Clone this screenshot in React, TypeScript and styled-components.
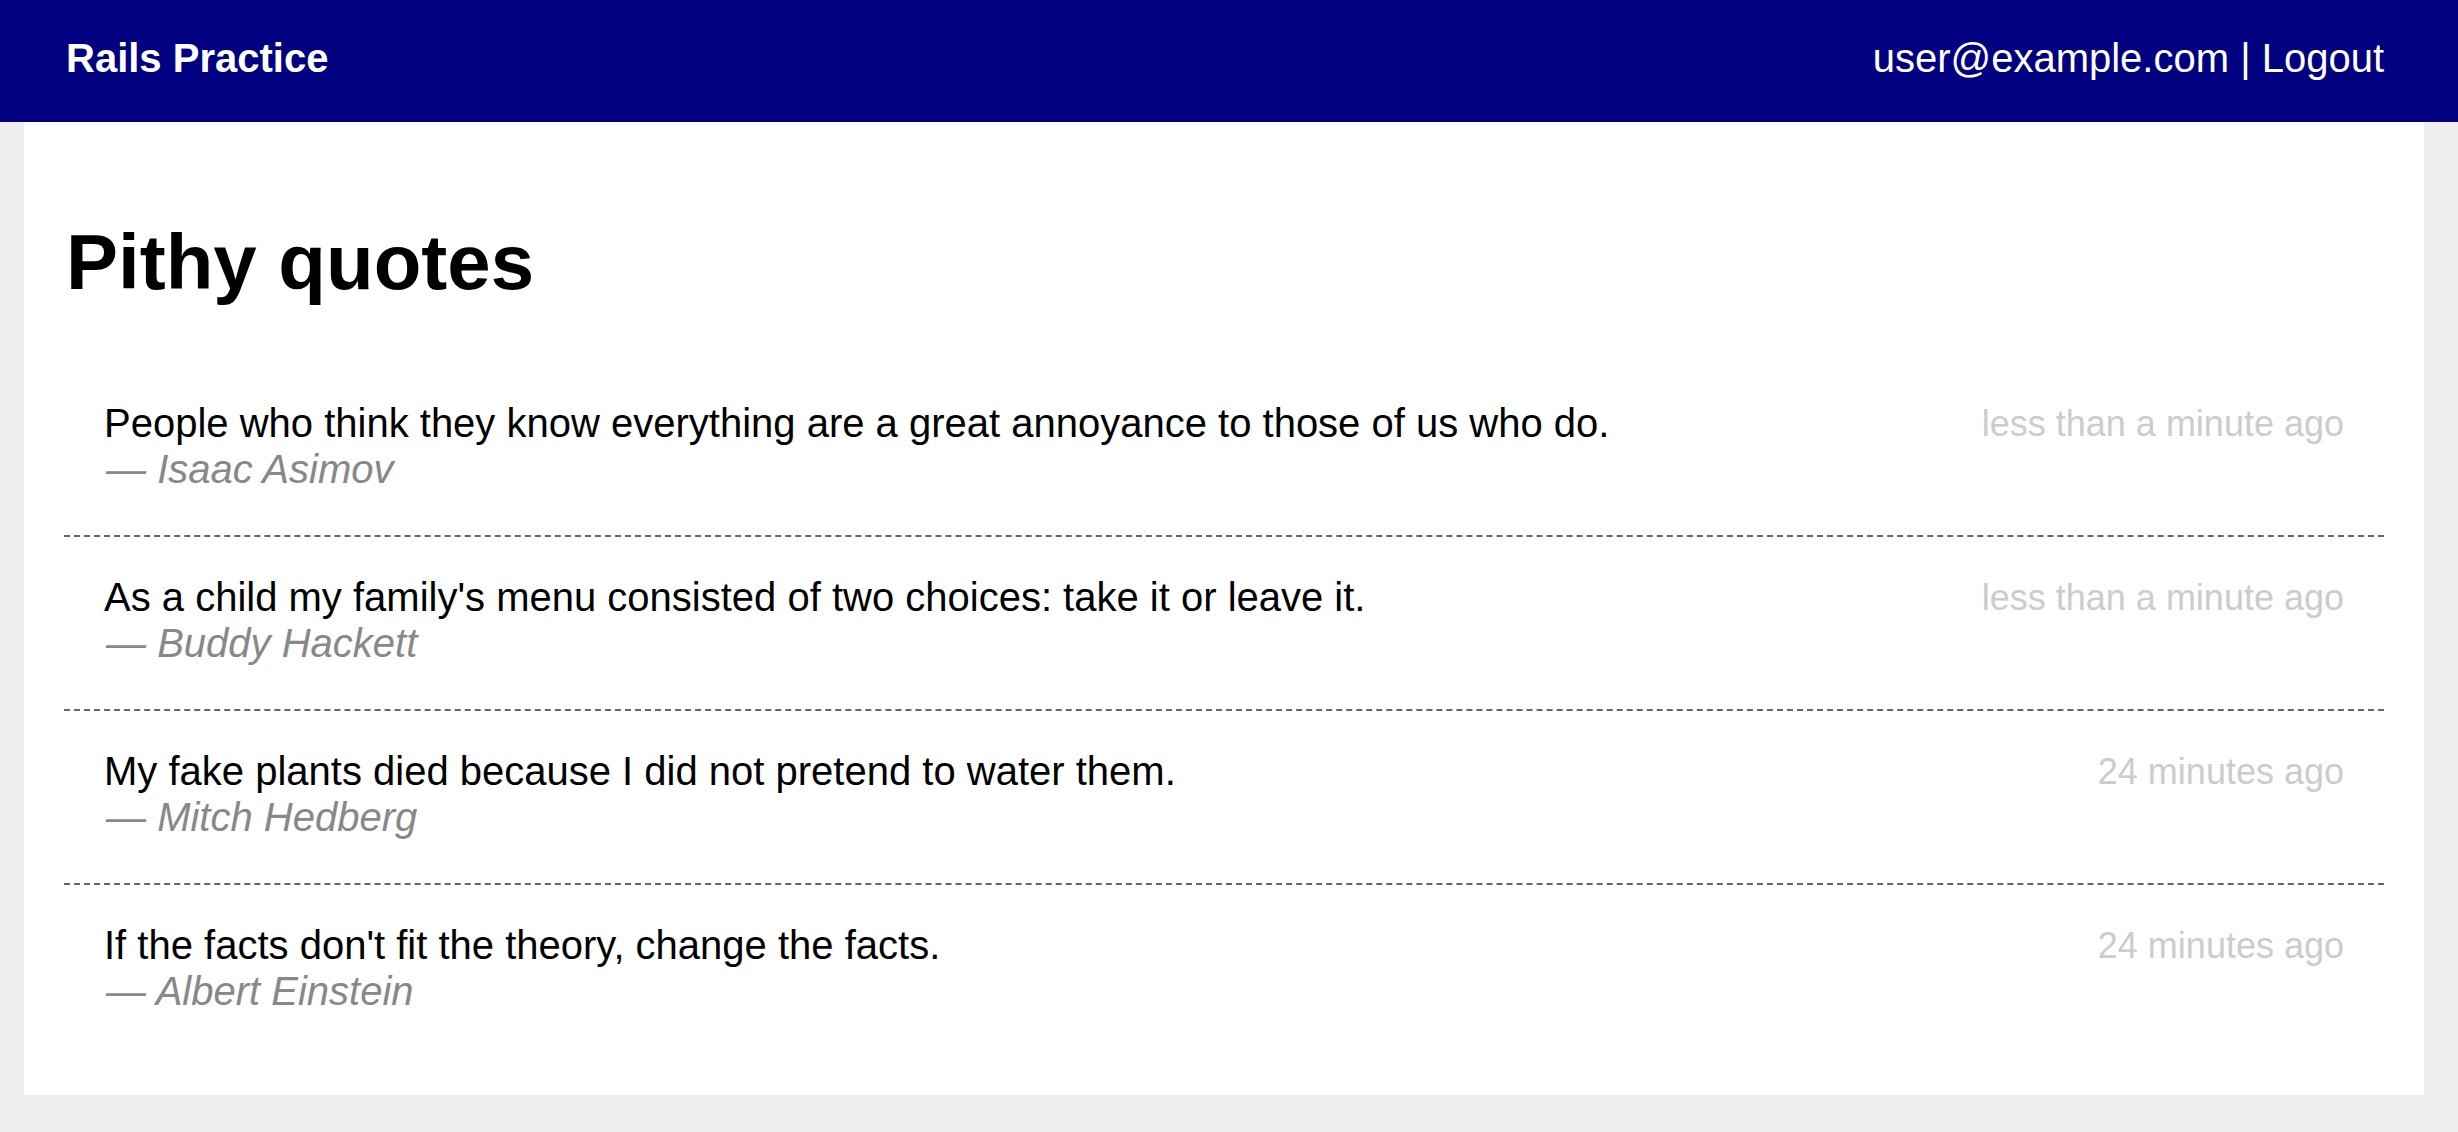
import React from "react";
import styled, { createGlobalStyle } from "styled-components";

const GlobalStyle = createGlobalStyle`
  html, body {
    margin: 0;
    padding: 0;
    background: #eeeeee;
    font-family: "Liberation Sans", Arial, Helvetica, sans-serif;
  }
`;

const Page = styled.div`
  padding-right: 10px;
  min-height: 1132px;
  box-sizing: border-box;
`;

const HeaderBar = styled.header`
  background: #000080;
  margin-right: -10px;
  padding-right: 10px;
`;

const HeaderInner = styled.div`
  width: 2400px;
  margin: 0 auto;
  box-sizing: border-box;
  height: 122px;
  padding: 0 40px 6px 40px;
  display: flex;
  align-items: center;
  justify-content: space-between;
  color: #ffffff;
  font-size: 40px;
`;

const Brand = styled.a`
  color: #ffffff;
  font-weight: bold;
  text-decoration: none;
  padding-left: 2px;
`;

const UserNav = styled.div`
  color: #ffffff;
  display: flex;
`;

const NavLink = styled.a`
  color: #ffffff;
  text-decoration: none;
`;

const Panel = styled.main`
  width: 2400px;
  margin: 0 auto;
  box-sizing: border-box;
  background: #ffffff;
  padding: 40px 40px 38px;
`;

const Title = styled.h1`
  font-size: 78px;
  line-height: 92px;
  font-weight: bold;
  margin: 54px 0 55px;
  padding-left: 2px;
  color: #000000;
`;

const QuoteList = styled.ul`
  list-style: none;
  margin: 0;
  padding: 0;
`;

const QuoteRow = styled.li<{ $last?: boolean }>`
  display: flex;
  justify-content: space-between;
  align-items: flex-start;
  padding: 37px 40px 43px;
  border-bottom: ${(p) => (p.$last ? "none" : "2px dashed #666666")};
`;

const QuoteBody = styled.div`
  display: flex;
  flex-direction: column;
`;

const QuoteText = styled.div`
  font-size: 40px;
  line-height: 46px;
  color: #000000;
`;

const Author = styled.div`
  font-size: 40px;
  line-height: 46px;
  font-style: italic;
  color: #888888;
  padding-left: 2px;
`;

const Timestamp = styled.div`
  font-size: 36px;
  line-height: 46px;
  color: #cccccc;
  padding-top: 1px;
  white-space: nowrap;
`;

const quotes = [
  {
    text: "People who think they know everything are a great annoyance to those of us who do.",
    author: "Isaac Asimov",
    time: "less than a minute ago",
  },
  {
    text: "As a child my family's menu consisted of two choices: take it or leave it.",
    author: "Buddy Hackett",
    time: "less than a minute ago",
  },
  {
    text: "My fake plants died because I did not pretend to water them.",
    author: "Mitch Hedberg",
    time: "24 minutes ago",
  },
  {
    text: "If the facts don't fit the theory, change the facts.",
    author: "Albert Einstein",
    time: "24 minutes ago",
  },
];

export default function App() {
  return (
    <>
      <GlobalStyle />
      <Page>
        <HeaderBar>
          <HeaderInner>
            <Brand href="#">Rails Practice</Brand>
            <UserNav>
              <span>user@example.com&nbsp;|&nbsp;</span>
              <NavLink href="#">Logout</NavLink>
            </UserNav>
          </HeaderInner>
        </HeaderBar>
        <Panel>
          <Title>Pithy quotes</Title>
          <QuoteList>
            {quotes.map((q, i) => (
              <QuoteRow key={i} $last={i === quotes.length - 1}>
                <QuoteBody>
                  <QuoteText>{q.text}</QuoteText>
                  <Author>— {q.author}</Author>
                </QuoteBody>
                <Timestamp>{q.time}</Timestamp>
              </QuoteRow>
            ))}
          </QuoteList>
        </Panel>
      </Page>
    </>
  );
}
